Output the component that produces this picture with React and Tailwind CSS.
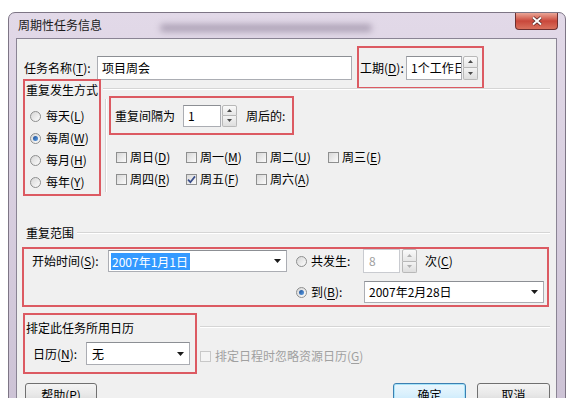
import React from 'react';

// 周期性任务信息 对话框（Win7 风格）

function U({ children }) {
  return <span className="underline underline-offset-[2px]">{children}</span>;
}

function Spinner({ className, disabled }) {
  const fill = disabled ? '#b0b0b0' : '#4a4a4a';
  return (
    <div className={`flex flex-col w-[15px] shrink-0 ${className}`}>
      <div className="flex-1 flex items-center justify-center border border-[#b8b8b8] rounded-t-[2px] bg-linear-to-b from-[#fafafa] to-[#e6e6e6]">
        <svg width="5" height="3" viewBox="0 0 5 3"><path d="M0 3L2.5 0L5 3Z" fill={fill} /></svg>
      </div>
      <div className="flex-1 flex items-center justify-center border border-t-0 border-[#b8b8b8] rounded-b-[2px] bg-linear-to-b from-[#f3f3f3] to-[#dedede]">
        <svg width="5" height="3" viewBox="0 0 5 3"><path d="M0 0L5 0L2.5 3Z" fill={fill} /></svg>
      </div>
    </div>
  );
}

function Radio({ checked }) {
  return (
    <span className="w-[11px] h-[11px] shrink-0 rounded-full border border-[#8e8f8f] bg-linear-to-br from-[#d6d6d6] to-[#fdfdfd] flex items-center justify-center">
      {checked && <span className="w-[5px] h-[5px] rounded-full bg-linear-to-br from-[#1d4f96] to-[#5fa0e6]" />}
    </span>
  );
}

function Check({ checked, disabled }) {
  return (
    <span className={disabled
      ? 'w-[11px] h-[11px] shrink-0 border border-[#c8c8c8] bg-[#f4f4f4] flex items-center justify-center'
      : 'w-[11px] h-[11px] shrink-0 border border-[#8e8f8f] bg-linear-to-br from-[#d8d8d8] to-[#fbfbfb] flex items-center justify-center'}>
      {checked && (
        <svg width="9" height="9" viewBox="0 0 9 9">
          <path d="M1 4.6L3.4 7.2L8 1.4" stroke="#3b4f8a" strokeWidth="1.7" fill="none" />
        </svg>
      )}
    </span>
  );
}

function Arrow() {
  return (
    <div className="w-[17px] h-full flex items-center justify-center shrink-0">
      <svg width="7" height="4" viewBox="0 0 7 4"><path d="M0 0H7L3.5 4Z" fill="#1a1a1a" /></svg>
    </div>
  );
}

function Etch() {
  return <div className="flex-1 border-t border-t-[#d5d5d5] border-b border-b-white" />;
}

const red = 'border-2 border-[#dc5a62]';

export default function App() {
  return (
    <div className="w-[575px] h-[398px] bg-white overflow-hidden pl-[8px] pt-[12px] text-[12px] leading-[16px] text-black"
      style={{ fontFamily: '"Noto Sans CJK SC", "Noto Sans", sans-serif' }}>
      <div className="w-[558px] h-[420px] rounded-t-[7px] border border-[#7d7585] bg-linear-to-b from-[#e2d9e8] to-[#cbc1d4] flex flex-col">
        {/* 标题栏 */}
        <div className="h-[25px] flex items-start shrink-0">
          <div className="ml-[9px] mt-[4px] w-[142px] text-[#1a1a1a]">周期性任务信息</div>
          <div className="mt-[11px] w-[212px] h-[8px] rounded-full bg-[#7d6f88] blur-[3px] opacity-50" />
          <div className="ml-auto mr-[7px] w-[43px] h-[17px] rounded-b-[4px] border border-[#6d3030] border-t-0 bg-linear-to-b from-[#e9a597] via-[#c9473b] to-[#d9705d] flex items-center justify-center">
            <svg width="12" height="10" viewBox="0 0 12 10">
              <path d="M2 1.5L10 8.5M10 1.5L2 8.5" stroke="#4a2020" strokeWidth="3.4" />
              <path d="M2 1.5L10 8.5M10 1.5L2 8.5" stroke="#ffffff" strokeWidth="2" />
            </svg>
          </div>
        </div>

        {/* 客户区 */}
        <div className="ml-[7px] w-[541px] flex-1 border border-[#8a8494] bg-[#f0f0f0] flex flex-col">
          {/* 任务名称 / 工期 */}
          <div className="mt-[7px] h-[43px] flex items-center pl-[7px]">
            <div className="w-[73px]">任务名称(<U>T</U>):</div>
            <div className="w-[255px] h-[24px] bg-white border border-[#abadb3] border-t-[#8c8f94] flex items-center pl-[4px]">项目周会</div>
            <div className={`ml-[5px] w-[127px] h-[43px] ${red} flex items-center pl-[1px]`}>
              <div className="w-[46px]">工期(<U>D</U>):</div>
              <div className="w-[56px] h-[24px] bg-white border border-[#abadb3] border-t-[#8c8f94] flex items-center pl-[4px] overflow-hidden whitespace-nowrap">1个工作日</div>
              <Spinner className="ml-[1px] h-[24px]" />
            </div>
          </div>

          {/* 重复发生方式 */}
          <div className="mt-[-10px] flex h-[117px]">
            <div className={`ml-[6px] w-[78px] h-[117px] ${red} flex flex-col`}>
              <div className="mt-[1px] pl-[1px] whitespace-nowrap">重复发生方式</div>
              <div className="mt-[7px] flex flex-col">
                {[['每天', 'L', false], ['每周', 'W', true], ['每月', 'H', false], ['每年', 'Y', false]].map(([t, k, c]) => (
                  <div key={k} className="h-[22px] flex items-center pl-[5px] gap-[5px]">
                    <Radio checked={c} />
                    <span>{t}(<U>{k}</U>)</span>
                  </div>
                ))}
              </div>
            </div>
            <div className="flex-1 flex flex-col">
              <div className="mt-[9px] ml-[2px] mr-[6px] flex"><Etch /></div>
              <div className="mt-[6px] flex">
                <div className="ml-[4px] mt-[3px] h-[93px] w-0 border-l border-l-[#d5d5d5] border-r border-r-white" />
                <div className="ml-[2px] flex flex-col">
                  <div className={`w-[185px] h-[39px] ${red} flex items-center pl-[4px]`}>
                    <div className="w-[68px]">重复间隔为</div>
                    <div className="w-[38px] h-[22px] bg-white border border-[#abadb3] border-t-[#8c8f94] flex items-center pl-[4px]">1</div>
                    <Spinner className="ml-[1px] h-[22px]" />
                    <div className="ml-[9px]">周后的:</div>
                  </div>
                  <div className="mt-[11px] pl-[7px] grid grid-cols-[70px_70px_72px_70px]">
                    {[['周日', 'D', false], ['周一', 'M', false], ['周二', 'U', false], ['周三', 'E', false],
                      ['周四', 'R', false], ['周五', 'F', true], ['周六', 'A', false]].map(([t, k, c]) => (
                      <div key={t} className="h-[22px] flex items-center gap-[3px] whitespace-nowrap">
                        <Check checked={c} />
                        <span>{t}(<U>{k}</U>)</span>
                      </div>
                    ))}
                  </div>
                </div>
              </div>
            </div>
          </div>

          {/* 重复范围 */}
          <div className="mt-[29px] h-[16px] flex items-center pl-[9px] pr-[6px] gap-[3px]">
            <span>重复范围</span>
            <Etch />
          </div>
          <div className={`mt-[6px] ml-[5px] w-[527px] h-[60px] ${red} flex flex-col`}>
            <div className="h-[24px] flex items-center pl-[8px]">
              <div className="w-[76px]">开始时间(<U>S</U>):</div>
              <div className="w-[179px] h-[22px] bg-white border border-[#abadb3] border-t-[#8c8f94] flex items-center pl-[2px]">
                <div className="flex-1">
                  <span className="inline-block bg-[#3399ff] text-white px-[1px] leading-[17px] w-[79px]">2007年1月1日</span>
                </div>
                <Arrow />
              </div>
              <div className="ml-[9px] flex items-center gap-[4px]">
                <Radio />
                <span className="w-[52px]">共发生:</span>
              </div>
              <div className="w-[37px] h-[24px] bg-white border border-[#c9cbd0] flex items-center pl-[5px] text-[#a0a0a0]">8</div>
              <Spinner className="ml-[2px] h-[24px]" disabled />
              <div className="ml-[8px]">次(<U>C</U>)</div>
            </div>
            <div className="mt-[8px] h-[22px] flex items-center pl-[272px]">
              <div className="flex items-center gap-[4px]">
                <Radio checked />
                <span className="w-[53px]">到(<U>B</U>):</span>
              </div>
              <div className="w-[180px] h-[22px] bg-white border border-[#abadb3] border-t-[#8c8f94] flex items-center pl-[4px]">
                <div className="flex-1">2007年2月28日</div>
                <Arrow />
              </div>
            </div>
          </div>

          {/* 日历 */}
          <div className="mt-[6px] flex">
            <div className={`ml-[6px] w-[174px] h-[61px] ${red} flex flex-col`}>
              <div className="mt-[5px] pl-[1px] whitespace-nowrap">排定此任务所用日历</div>
              <div className="mt-[6px] h-[23px] flex items-center pl-[8px]">
                <div className="w-[53px]">日历(<U>N</U>):</div>
                <div className="w-[104px] h-[23px] bg-white border border-[#abadb3] border-t-[#8c8f94] flex items-center pl-[5px]">
                  <div className="flex-1">无</div>
                  <Arrow />
                </div>
              </div>
            </div>
            <div className="flex-1 flex flex-col">
              <div className="mt-[13px] ml-[3px] mr-[6px] flex"><Etch /></div>
              <div className="mt-[20px] ml-[3px] flex items-center gap-[4px] text-[#a0a0a0] whitespace-nowrap">
                <Check disabled />
                <span>排定日程时忽略资源日历(<U>G</U>)</span>
              </div>
            </div>
          </div>

          {/* 按钮 */}
          <div className="mt-[9px] flex pl-[8px] pr-[6px]">
            <button className="w-[72px] h-[23px] rounded-[3px] border border-[#707070] bg-linear-to-b from-[#f4f4f4] via-[#e8e8e8] to-[#d4d4d4] flex items-center justify-center">帮助(<U>P</U>)</button>
            <button className="ml-auto w-[73px] h-[23px] rounded-[3px] border border-[#3c7fb1] bg-linear-to-b from-[#eaf6fd] via-[#d9f0fc] to-[#bee6fd] shadow-[inset_0_0_0_1px_#a6e3f8] flex items-center justify-center">确定</button>
            <button className="ml-[11px] w-[73px] h-[23px] rounded-[3px] border border-[#707070] bg-linear-to-b from-[#f4f4f4] via-[#e8e8e8] to-[#d4d4d4] flex items-center justify-center">取消</button>
          </div>
        </div>
      </div>
    </div>
  );
}
